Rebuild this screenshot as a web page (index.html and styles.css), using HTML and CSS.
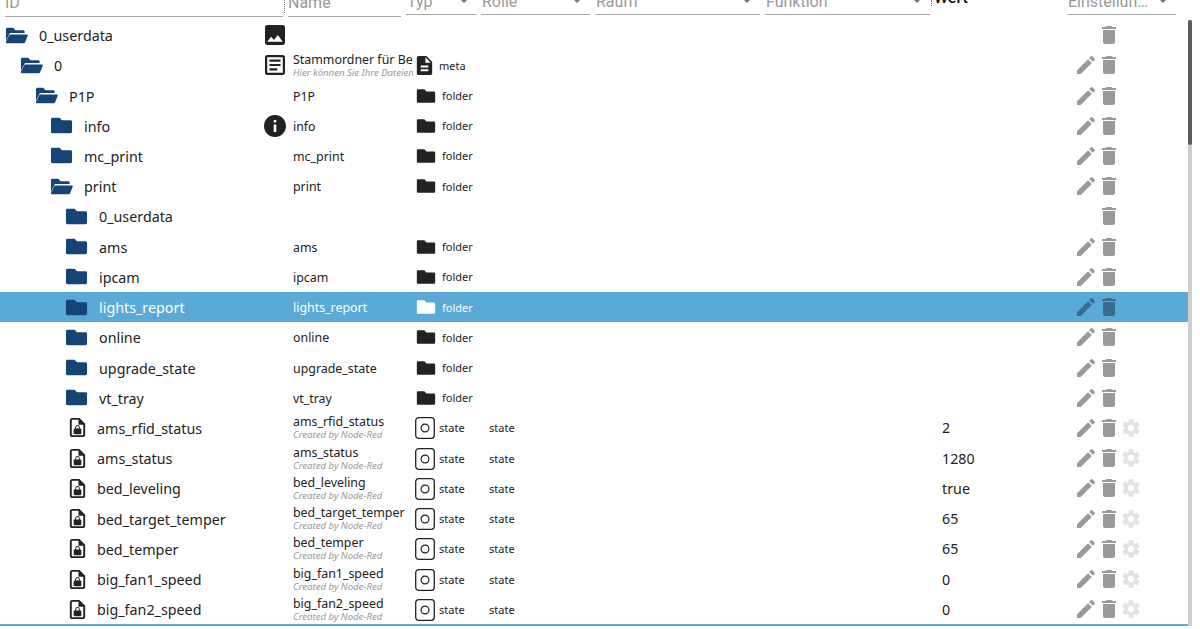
FILE: index.html
```html
<!DOCTYPE html>
<html lang="de">
<head>
<meta charset="utf-8">
<title>Objekte</title>
<link rel="stylesheet" href="styles.css">
</head>
<body>
<svg class="defs" width="0" height="0" aria-hidden="true">
<symbol id="i-closed" viewBox="0 0 24 24"><path d="M10 4H2.500C1.700 4 1 4.700 1 5.500v13c0 .8.7 1.500 1.500 1.500h19c.8 0 1.500-.7 1.500-1.500V8c0-.8-.7-1.500-1.500-1.500H12.500z"/></symbol>
<symbol id="i-open" viewBox="0 0 24 24"><path d="M1 17.500V5.500C1 4.700 1.700 4 2.500 4h6l2.500 2.400h8c.8 0 1.500.7 1.500 1.500V9.500H6.500c-1 0-1.800.5-2.200 1.400z"/><path d="M5.500 11h17.300c.7 0 1.100.6.9 1.200l-2.700 6.800c-.2.6-.7 1-1.400 1H1.700c-.6 0-1-.6-.8-1.100l3.300-7c.2-.6.7-.9 1.300-.9z"/></symbol>
<symbol id="i-pencil" viewBox="0 0 24 24"><path d="M3 17.250V21h3.750L17.810 9.940l-3.750-3.750L3 17.250zM20.710 7.040c.39-.39.39-1.020 0-1.410l-2.340-2.340a.9959.9959 0 0 0-1.410 0l-1.830 1.830 3.750 3.750 1.830-1.830z"/></symbol>
<symbol id="i-trash" viewBox="0 0 24 24"><path d="M6 19c0 1.100.9 2 2 2h8c1.100 0 2-.9 2-2V7H6v12zM19 4h-3.500l-1-1h-5l-1 1H5v2h14V4z"/></symbol>
<symbol id="i-gear" viewBox="0 0 24 24"><path d="M19.140 12.940c.04-.3.06-.61.06-.94 0-.32-.02-.64-.07-.94l2.030-1.580c.18-.14.23-.41.12-.61l-1.920-3.320c-.12-.22-.37-.29-.59-.22l-2.390.96c-.5-.38-1.030-.7-1.620-.94l-.36-2.540c-.04-.24-.24-.41-.48-.41h-3.840c-.24 0-.43.17-.47.41l-.36 2.540c-.59.24-1.130.57-1.620.94l-2.390-.96c-.22-.08-.47 0-.59.22L2.740 8.870c-.12.21-.08.47.12.61l2.030 1.580c-.05.3-.09.63-.09.94s.02.64.07.94l-2.030 1.580c-.18.14-.23.41-.12.61l1.920 3.320c.12.22.37.29.59.22l2.390-.96c.5.38 1.030.7 1.620.94l.36 2.540c.05.24.24.41.48.41h3.840c.24 0 .44-.17.47-.41l.36-2.540c.59-.24 1.130-.56 1.620-.94l2.390.96c.22.08.47 0 .59-.22l1.920-3.320c.12-.22.07-.47-.12-.61l-2.010-1.580zM12 15.600c-1.980 0-3.600-1.620-3.600-3.600s1.620-3.600 3.600-3.600 3.600 1.620 3.600 3.600-1.620 3.600-3.600 3.600z"/></symbol>
<symbol id="i-image" viewBox="1.200 1.200 21.600 21.600"><path d="M21 19V5c0-1.100-.9-2-2-2H5c-1.100 0-2 .9-2 2v14c0 1.100.9 2 2 2h14c1.100 0 2-.9 2-2zM8.500 13.500l2.500 3.010L14.500 12l4.500 6H5l3.500-4.500z"/></symbol>
<symbol id="i-article" viewBox="1.200 1.200 21.600 21.600"><path d="M19 5v14H5V5h14m0-2H5c-1.100 0-2 .9-2 2v14c0 1.100.9 2 2 2h14c1.100 0 2-.9 2-2V5c0-1.100-.9-2-2-2z"/><path d="M14 17H7v-2h7v2zm3-4H7v-2h10v2zm0-4H7V7h10v2z"/></symbol>
<symbol id="i-info" viewBox="0 0 24 24"><path d="M12 1C5.900 1 1 5.900 1 12s4.900 11 11 11 11-4.900 11-11S18.100 1 12 1zm1.300 17h-2.600v-7.500h2.600V18zm0-9.500h-2.600V6h2.600v2.500z"/></symbol>
<symbol id="i-meta" viewBox="0 0 24 24"><path d="M14 2H6c-1.100 0-1.990.9-1.990 2L4 20c0 1.100.89 2 1.990 2H18c1.100 0 2-.9 2-2V8l-6-6zm2 16H8v-2h8v2zm0-4H8v-2h8v2zm-3-5V3.500L18.500 9H13z"/></symbol>
<symbol id="i-file" viewBox="0 0 24 24"><path d="M14 2H6.500C5.100 2 4 3.100 4 4.500v15C4 20.900 5.100 22 6.500 22h11c1.400 0 2.500-1.100 2.500-2.500V8l-6-6zm4 17.500c0 .3-.2.5-.5.5h-11c-.3 0-.5-.2-.5-.5v-15c0-.3.2-.5.500-.5H13v5h5v10.500z"/><path d="M15 13h-.6v-1.100a2.400 2.400 0 0 0-4.800 0V13H9c-.5 0-1 .4-1 1v4c0 .5.5 1 1 1h6c.5 0 1-.5 1-1v-4c0-.6-.5-1-1-1zm-1.600 0h-2.800v-1.100a1.400 1.400 0 0 1 2.800 0V13z"/></symbol>
<symbol id="i-state" viewBox="0 0 20 22"><rect x=".7" y=".7" width="18.600" height="20.600" rx="3" fill="none" stroke="#222" stroke-width="1.300"/><circle cx="10" cy="11" r="3.900" fill="none" stroke="#222" stroke-width="1.200"/></symbol>
</svg>
<div class="app">
<main class="table">
<header class="head">
<div class="filter f-id"><span>ID</span></div>
<div class="sep"></div>
<div class="filter f-name"><span>Name</span></div>
<div class="filter sel f-typ"><span>Typ</span><b class="arrow"></b></div>
<div class="filter sel f-rolle"><span>Rolle</span><b class="arrow"></b></div>
<div class="filter sel f-raum"><span>Raum</span><b class="arrow"></b></div>
<div class="filter sel f-funk"><span>Funktion</span><b class="arrow"></b></div>
<div class="wert">Wert</div>
<div class="filter sel f-ein"><span>Einstellun…</span><b class="arrow"></b></div>
</header>
<div class="rows">

<div class="row"><div class="c-id l0"><svg class="ti"><use href="#i-open"/></svg><span>0_userdata</span></div><div class="c-ico"><svg><use href="#i-image"/></svg></div><div class="c-name"></div><div class="c-typ"></div><div class="c-rol"></div><div class="c-val"></div><div class="c-act"><span class="a"></span><svg class="a t"><use href="#i-trash"/></svg></div></div>

<div class="row"><div class="c-id l1"><svg class="ti"><use href="#i-open"/></svg><span>0</span></div><div class="c-ico"><svg><use href="#i-article"/></svg></div><div class="c-name two"><span>Stammordner für Benutzerdateien</span><small>Hier können Sie Ihre Dateien ablegen</small></div><div class="c-typ"><svg class="tm"><use href="#i-meta"/></svg><span class="tx-m">meta</span></div><div class="c-rol"></div><div class="c-val"></div><div class="c-act"><svg class="a"><use href="#i-pencil"/></svg><svg class="a t"><use href="#i-trash"/></svg></div></div>

<div class="row"><div class="c-id l2"><svg class="ti"><use href="#i-open"/></svg><span>P1P</span></div><div class="c-ico"></div><div class="c-name">P1P</div><div class="c-typ"><svg class="tf"><use href="#i-closed"/></svg><span class="tx-f">folder</span></div><div class="c-rol"></div><div class="c-val"></div><div class="c-act"><svg class="a"><use href="#i-pencil"/></svg><svg class="a t"><use href="#i-trash"/></svg></div></div>

<div class="row"><div class="c-id l3"><svg class="ti"><use href="#i-closed"/></svg><span>info</span></div><div class="c-ico"><svg><use href="#i-info"/></svg></div><div class="c-name">info</div><div class="c-typ"><svg class="tf"><use href="#i-closed"/></svg><span class="tx-f">folder</span></div><div class="c-rol"></div><div class="c-val"></div><div class="c-act"><svg class="a"><use href="#i-pencil"/></svg><svg class="a t"><use href="#i-trash"/></svg></div></div>

<div class="row"><div class="c-id l3"><svg class="ti"><use href="#i-closed"/></svg><span>mc_print</span></div><div class="c-ico"></div><div class="c-name">mc_print</div><div class="c-typ"><svg class="tf"><use href="#i-closed"/></svg><span class="tx-f">folder</span></div><div class="c-rol"></div><div class="c-val"></div><div class="c-act"><svg class="a"><use href="#i-pencil"/></svg><svg class="a t"><use href="#i-trash"/></svg></div></div>

<div class="row"><div class="c-id l3"><svg class="ti"><use href="#i-open"/></svg><span>print</span></div><div class="c-ico"></div><div class="c-name">print</div><div class="c-typ"><svg class="tf"><use href="#i-closed"/></svg><span class="tx-f">folder</span></div><div class="c-rol"></div><div class="c-val"></div><div class="c-act"><svg class="a"><use href="#i-pencil"/></svg><svg class="a t"><use href="#i-trash"/></svg></div></div>

<div class="row"><div class="c-id l4"><svg class="ti"><use href="#i-closed"/></svg><span>0_userdata</span></div><div class="c-ico"></div><div class="c-name"></div><div class="c-typ"></div><div class="c-rol"></div><div class="c-val"></div><div class="c-act"><span class="a"></span><svg class="a t"><use href="#i-trash"/></svg></div></div>

<div class="row"><div class="c-id l4"><svg class="ti"><use href="#i-closed"/></svg><span>ams</span></div><div class="c-ico"></div><div class="c-name">ams</div><div class="c-typ"><svg class="tf"><use href="#i-closed"/></svg><span class="tx-f">folder</span></div><div class="c-rol"></div><div class="c-val"></div><div class="c-act"><svg class="a"><use href="#i-pencil"/></svg><svg class="a t"><use href="#i-trash"/></svg></div></div>

<div class="row"><div class="c-id l4"><svg class="ti"><use href="#i-closed"/></svg><span>ipcam</span></div><div class="c-ico"></div><div class="c-name">ipcam</div><div class="c-typ"><svg class="tf"><use href="#i-closed"/></svg><span class="tx-f">folder</span></div><div class="c-rol"></div><div class="c-val"></div><div class="c-act"><svg class="a"><use href="#i-pencil"/></svg><svg class="a t"><use href="#i-trash"/></svg></div></div>

<div class="row selected"><div class="c-id l4"><svg class="ti"><use href="#i-closed"/></svg><span>lights_report</span></div><div class="c-ico"></div><div class="c-name">lights_report</div><div class="c-typ"><svg class="tf"><use href="#i-closed"/></svg><span class="tx-f">folder</span></div><div class="c-rol"></div><div class="c-val"></div><div class="c-act"><svg class="a"><use href="#i-pencil"/></svg><svg class="a t"><use href="#i-trash"/></svg></div></div>

<div class="row"><div class="c-id l4"><svg class="ti"><use href="#i-closed"/></svg><span>online</span></div><div class="c-ico"></div><div class="c-name">online</div><div class="c-typ"><svg class="tf"><use href="#i-closed"/></svg><span class="tx-f">folder</span></div><div class="c-rol"></div><div class="c-val"></div><div class="c-act"><svg class="a"><use href="#i-pencil"/></svg><svg class="a t"><use href="#i-trash"/></svg></div></div>

<div class="row"><div class="c-id l4"><svg class="ti"><use href="#i-closed"/></svg><span>upgrade_state</span></div><div class="c-ico"></div><div class="c-name">upgrade_state</div><div class="c-typ"><svg class="tf"><use href="#i-closed"/></svg><span class="tx-f">folder</span></div><div class="c-rol"></div><div class="c-val"></div><div class="c-act"><svg class="a"><use href="#i-pencil"/></svg><svg class="a t"><use href="#i-trash"/></svg></div></div>

<div class="row"><div class="c-id l4"><svg class="ti"><use href="#i-closed"/></svg><span>vt_tray</span></div><div class="c-ico"></div><div class="c-name">vt_tray</div><div class="c-typ"><svg class="tf"><use href="#i-closed"/></svg><span class="tx-f">folder</span></div><div class="c-rol"></div><div class="c-val"></div><div class="c-act"><svg class="a"><use href="#i-pencil"/></svg><svg class="a t"><use href="#i-trash"/></svg></div></div>

<div class="row"><div class="c-id ls"><svg class="tl"><use href="#i-file"/></svg><span>ams_rfid_status</span></div><div class="c-ico"></div><div class="c-name two"><span>ams_rfid_status</span><small>Created by Node-Red</small></div><div class="c-typ"><svg class="ts"><use href="#i-state"/></svg><span class="tx-m">state</span></div><div class="c-rol">state</div><div class="c-val">2</div><div class="c-act"><svg class="a"><use href="#i-pencil"/></svg><svg class="a t"><use href="#i-trash"/></svg><svg class="g"><use href="#i-gear"/></svg></div></div>

<div class="row"><div class="c-id ls"><svg class="tl"><use href="#i-file"/></svg><span>ams_status</span></div><div class="c-ico"></div><div class="c-name two"><span>ams_status</span><small>Created by Node-Red</small></div><div class="c-typ"><svg class="ts"><use href="#i-state"/></svg><span class="tx-m">state</span></div><div class="c-rol">state</div><div class="c-val">1280</div><div class="c-act"><svg class="a"><use href="#i-pencil"/></svg><svg class="a t"><use href="#i-trash"/></svg><svg class="g"><use href="#i-gear"/></svg></div></div>

<div class="row"><div class="c-id ls"><svg class="tl"><use href="#i-file"/></svg><span>bed_leveling</span></div><div class="c-ico"></div><div class="c-name two"><span>bed_leveling</span><small>Created by Node-Red</small></div><div class="c-typ"><svg class="ts"><use href="#i-state"/></svg><span class="tx-m">state</span></div><div class="c-rol">state</div><div class="c-val">true</div><div class="c-act"><svg class="a"><use href="#i-pencil"/></svg><svg class="a t"><use href="#i-trash"/></svg><svg class="g"><use href="#i-gear"/></svg></div></div>

<div class="row"><div class="c-id ls"><svg class="tl"><use href="#i-file"/></svg><span>bed_target_temper</span></div><div class="c-ico"></div><div class="c-name two"><span>bed_target_temper</span><small>Created by Node-Red</small></div><div class="c-typ"><svg class="ts"><use href="#i-state"/></svg><span class="tx-m">state</span></div><div class="c-rol">state</div><div class="c-val">65</div><div class="c-act"><svg class="a"><use href="#i-pencil"/></svg><svg class="a t"><use href="#i-trash"/></svg><svg class="g"><use href="#i-gear"/></svg></div></div>

<div class="row"><div class="c-id ls"><svg class="tl"><use href="#i-file"/></svg><span>bed_temper</span></div><div class="c-ico"></div><div class="c-name two"><span>bed_temper</span><small>Created by Node-Red</small></div><div class="c-typ"><svg class="ts"><use href="#i-state"/></svg><span class="tx-m">state</span></div><div class="c-rol">state</div><div class="c-val">65</div><div class="c-act"><svg class="a"><use href="#i-pencil"/></svg><svg class="a t"><use href="#i-trash"/></svg><svg class="g"><use href="#i-gear"/></svg></div></div>

<div class="row"><div class="c-id ls"><svg class="tl"><use href="#i-file"/></svg><span>big_fan1_speed</span></div><div class="c-ico"></div><div class="c-name two"><span>big_fan1_speed</span><small>Created by Node-Red</small></div><div class="c-typ"><svg class="ts"><use href="#i-state"/></svg><span class="tx-m">state</span></div><div class="c-rol">state</div><div class="c-val">0</div><div class="c-act"><svg class="a"><use href="#i-pencil"/></svg><svg class="a t"><use href="#i-trash"/></svg><svg class="g"><use href="#i-gear"/></svg></div></div>

<div class="row"><div class="c-id ls"><svg class="tl"><use href="#i-file"/></svg><span>big_fan2_speed</span></div><div class="c-ico"></div><div class="c-name two"><span>big_fan2_speed</span><small>Created by Node-Red</small></div><div class="c-typ"><svg class="ts"><use href="#i-state"/></svg><span class="tx-m">state</span></div><div class="c-rol">state</div><div class="c-val">0</div><div class="c-act"><svg class="a"><use href="#i-pencil"/></svg><svg class="a t"><use href="#i-trash"/></svg><svg class="g"><use href="#i-gear"/></svg></div></div>

</div>
</main>
<aside class="scroll"><div class="track"><div class="thumb"></div></div></aside>
</div>
</body>
</html>
```
FILE: styles.css
```css
* { box-sizing: border-box; }
html, body { margin: 0; height: 100%; background: #fff; overflow: hidden; }
body { font-family: "Noto Sans", "Open Sans", sans-serif; color: #222; }
.defs { position: absolute; }
.app { display: flex; height: 629px; }
.table { width: 1188px; height: 626px; border-bottom: 2px solid #5aaad8; overflow: hidden; display: flex; flex-direction: column; }

.head { flex: none; height: 20px; display: flex; align-items: flex-start; overflow: hidden; font-family: Roboto, sans-serif; }
.filter { flex: none; height: 17px; border-bottom: 1px solid #a8a8a8; display: flex; align-items: flex-end; overflow: hidden; color: #999; font-size: 16px; line-height: 19px; position: relative; }
.filter span { display: block; margin-bottom: 4px; white-space: nowrap; }
.sel { height: 15px; }
.sel span { margin-bottom: 3px; padding-left: 1px; }
.f-id { width: 278px; margin-left: 5px; }
.sep { flex: none; width: 1px; height: 13px; margin: 0 3px 0 1px; border-left: 1px dotted #777; }
.f-name { width: 113px; }
.f-typ { width: 71px; margin-left: 5px; }
.f-rolle { width: 109px; margin-left: 4px; }
.f-raum { width: 165px; margin-left: 5px; }
.f-funk { width: 165px; margin-left: 5px; }
.f-ein { width: 109px; }
.arrow { position: absolute; right: 10px; top: 0; border: 3px solid transparent; border-top: 3px solid #777; border-bottom: 0; }
.wert { flex: none; width: 137px; margin-top: -11px; padding-left: 4px; font-size: 16px; line-height: 18px; font-weight: 500; color: #111; position: relative; }
.wert::before { content: ""; position: absolute; left: 1px; top: 11px; height: 6px; border-left: 1px dotted #777; }

.rows { flex: 1; min-height: 0; overflow: hidden; }
.row { height: 30.220px; display: flex; align-items: center; }
.row.selected { background: #5aaad8; color: #fff; }
.row svg { display: block; flex: none; }

.c-id { width: 258px; flex: none; display: flex; align-items: center; font-size: 14.300px; white-space: nowrap; }
.c-id span { margin-left: 11px; padding-top: 1px; }
.l0 { padding-left: 5px; }
.l1 { padding-left: 20px; }
.l2 { padding-left: 35px; }
.l3 { padding-left: 50px; }
.l4 { padding-left: 65px; }
.ls { padding-left: 65.500px; }
.ls span { margin-left: 8.500px; }
.ti { width: 23px; height: 23px; fill: #164477; }
.tl { width: 23px; height: 23px; fill: #222; }

.c-ico { width: 35px; flex: none; height: 24px; padding-left: 5px; }
.c-ico svg { width: 24px; height: 24px; fill: #222; }

.c-name { width: 120px; flex: none; padding-top: 1px; white-space: nowrap; overflow: hidden; font-size: 12.400px; }
.two { line-height: 14px; display: flex; flex-direction: column; padding-top: 0; margin-top: 1px; }
.two small { font-size: 9.600px; line-height: 13px; margin-top: -1px; font-style: italic; color: #999; }
.selected .c-name { color: #fff; }

.c-typ { width: 76px; flex: none; display: flex; align-items: center; padding-left: 2px; font-size: 11px; }
.tf { width: 20px; height: 20px; fill: #222; margin-left: 1px; }
.tm { width: 23px; height: 23px; fill: #222; margin-left: -2px; }
.ts { width: 20px; height: 22px; margin-top: 1px; }
.tx-f { margin-left: 6px; }
.tx-m { margin-left: 4px; }
.tm + .tx-m { margin-left: 3px; }
.selected .tf { fill: #fff; }

.c-rol { width: 441px; flex: none; font-size: 11px; }
.c-val { width: 144px; flex: none; padding-left: 12px; font-size: 14.300px; }
.c-act { flex: none; display: flex; align-items: center; }
.a { width: 24px; height: 24px; fill: #9a9a9a; display: block; }
.t { margin-left: -1px; }
.g { width: 22px; height: 22px; fill: #e2e2e2; margin-left: -1px; }
.selected .a { fill: #3a6c8e; }

.scroll { width: 12px; height: 626px; padding-top: 20px; }
.track { width: 4px; height: 100%; background: #cfcfcf; position: relative; }
.thumb { position: absolute; left: 0; top: 0; width: 4px; height: 125px; border-radius: 2px; background: #5a5a5a; }
```
